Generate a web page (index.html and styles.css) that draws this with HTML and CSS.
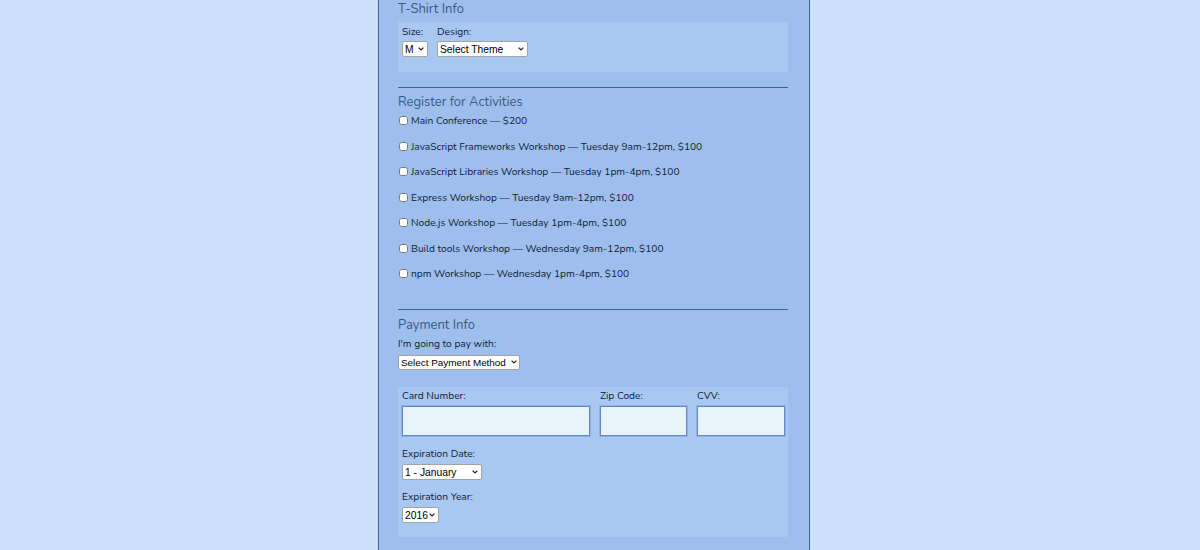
FILE: index.html
```html
<!DOCTYPE html>
<html>
<head>
<meta charset="utf-8">
<link rel="stylesheet" href="styles.css">
</head>
<body>
<div class="page">
  <form class="form">
    <h2 class="section-title">T-Shirt Info</h2>
    <div class="box shirt-box">
      <div class="field">
        <label class="lbl">Size:</label>
        <span class="sel-wrap sel-size">
          <select class="sel"><option>M</option></select>
          <svg class="chev" viewBox="0 0 6 4" width="6" height="4"><polyline points="0.6,0.6 3,3 5.4,0.6" fill="none" stroke="#222" stroke-width="1.2"/></svg>
        </span>
      </div>
      <div class="field">
        <label class="lbl">Design:</label>
        <span class="sel-wrap sel-design">
          <select class="sel"><option>Select Theme</option></select>
          <svg class="chev" viewBox="0 0 6 4" width="6" height="4"><polyline points="0.6,0.6 3,3 5.4,0.6" fill="none" stroke="#222" stroke-width="1.2"/></svg>
        </span>
      </div>
    </div>

    <hr class="rule">

    <h2 class="section-title">Register for Activities</h2>
    <div class="activities">
      <label class="act"><input type="checkbox" class="chk">Main Conference — $200</label>
      <label class="act"><input type="checkbox" class="chk">JavaScript Frameworks Workshop — Tuesday 9am-12pm, $100</label>
      <label class="act"><input type="checkbox" class="chk">JavaScript Libraries Workshop — Tuesday 1pm-4pm, $100</label>
      <label class="act"><input type="checkbox" class="chk">Express Workshop — Tuesday 9am-12pm, $100</label>
      <label class="act"><input type="checkbox" class="chk">Node.js Workshop — Tuesday 1pm-4pm, $100</label>
      <label class="act"><input type="checkbox" class="chk">Build tools Workshop — Wednesday 9am-12pm, $100</label>
      <label class="act"><input type="checkbox" class="chk">npm Workshop — Wednesday 1pm-4pm, $100</label>
    </div>

    <hr class="rule rule-2">

    <h2 class="section-title pay-title">Payment Info</h2>
    <label class="lbl pay-lbl">I'm going to pay with:</label>
    <span class="sel-wrap sel-pay">
      <select class="sel"><option>Select Payment Method</option></select>
      <svg class="chev" viewBox="0 0 6 4" width="6" height="4"><polyline points="0.6,0.6 3,3 5.4,0.6" fill="none" stroke="#222" stroke-width="1.2"/></svg>
    </span>

    <div class="box card-box">
      <div class="card-grid">
        <div class="field">
          <label class="lbl">Card Number:</label>
          <input type="text" class="txt">
        </div>
        <div class="field">
          <label class="lbl">Zip Code:</label>
          <input type="text" class="txt">
        </div>
        <div class="field">
          <label class="lbl">CVV:</label>
          <input type="text" class="txt">
        </div>
      </div>
      <div class="field exp exp-date">
        <label class="lbl">Expiration Date:</label>
        <span class="sel-wrap sel-month">
          <select class="sel"><option>1 - January</option></select>
          <svg class="chev" viewBox="0 0 6 4" width="6" height="4"><polyline points="0.6,0.6 3,3 5.4,0.6" fill="none" stroke="#222" stroke-width="1.2"/></svg>
        </span>
      </div>
      <div class="field exp exp-year">
        <label class="lbl">Expiration Year:</label>
        <span class="sel-wrap sel-year">
          <select class="sel"><option>2016</option></select>
          <svg class="chev" viewBox="0 0 6 4" width="6" height="4"><polyline points="0.6,0.6 3,3 5.4,0.6" fill="none" stroke="#222" stroke-width="1.2"/></svg>
        </span>
      </div>
    </div>
  </form>
</div>
</body>
</html>
```

FILE: styles.css
```css
html, body {
  margin: 0;
  padding: 0;
}
body {
  background: #cbe0fa;
  font-family: "Nunito", Lato, "Open Sans", sans-serif;
  color: #111b33;
  height: 550px;
  overflow: hidden;
}
.page {
  margin-left: 378px;
  width: 432px;
  min-height: 550px;
  background: #9ebfee;
  border-left: 1px solid #3d6592;
  border-right: 1px solid #3d6592;
  padding: 1px 21px 0 19px;
  box-sizing: border-box;
}
.form {
  display: flex;
  flex-direction: column;
  align-items: flex-start;
}
.section-title {
  margin: 0;
  font-size: 13px;
  line-height: 16px;
  font-weight: 400;
  color: #3b5a80;
}
.box {
  align-self: stretch;
  background: #a8c8f2;
  box-sizing: border-box;
}
.shirt-box {
  margin-top: 5px;
  height: 50px;
  padding: 4px 4px 0;
  display: flex;
  gap: 9px;
}
.field {
  display: flex;
  flex-direction: column;
  align-items: flex-start;
}
.lbl {
  font-size: 10.2px;
  line-height: 12px;
  color: #111b33;
}
.sel-wrap {
  position: relative;
  display: inline-flex;
  margin-top: 3px;
  height: 16px;
}
.sel {
  -webkit-appearance: none;
  appearance: none;
  width: 100%;
  font-family: "Liberation Sans", Arial, sans-serif;
  font-size: 10.3px;
  line-height: 14px;
  height: 100%;
  margin: 0;
  padding: 1px 0 0 2px;
  background: #fff;
  color: #000;
  border: 1px solid #a3a3a3;
  border-radius: 2px;
  box-sizing: border-box;
  outline: none;
}
.chev {
  position: absolute;
  right: 4px;
  top: 6px;
  pointer-events: none;
}
.sel-size { width: 26px; }
.sel-design { width: 91px; }
.rule {
  align-self: stretch;
  margin: 15px 0 6px;
  border: 0;
  border-top: 1px solid #3e6290;
  height: 0;
}
.rule-2 { margin-top: 28px; margin-bottom: 7px; }
.activities {
  display: flex;
  flex-direction: column;
  gap: 11.5px;
  margin-top: 4px;
}
.act {
  display: flex;
  align-items: center;
  font-size: 10.2px;
  line-height: 14px;
  color: #111b33;
}
.chk {
  width: 9px;
  height: 9px;
  margin: 0 3px 1px 1px;
}
.pay-lbl { margin-top: 5px; }
.sel-pay { width: 122px; margin-top: 5px; height: 15px; }
.sel-pay .sel { padding-top: 0; font-size: 9.9px; }
.sel-pay .chev { top: 5px; right: 3px; }
.card-box {
  margin-top: 17px;
  padding: 3px 3px 14px 4px;
}
.card-grid {
  display: grid;
  grid-template-columns: 188px 87px 88px;
  column-gap: 10px;
}
.card-grid .field { align-items: stretch; }
.txt {
  margin-top: 4px;
  height: 30px;
  box-sizing: border-box;
  background: #e8f4fb;
  border: 1px solid #6289c6;
  box-shadow: 0 0 0 1px rgba(98,137,198,0.35);
  padding: 0 4px;
}
.exp-date { margin-top: 12px; }
.exp-year { margin-top: 11px; }
.exp .sel-wrap { margin-top: 4px; }
.sel-month { width: 80px; }
.sel-year { width: 37px; }
```
